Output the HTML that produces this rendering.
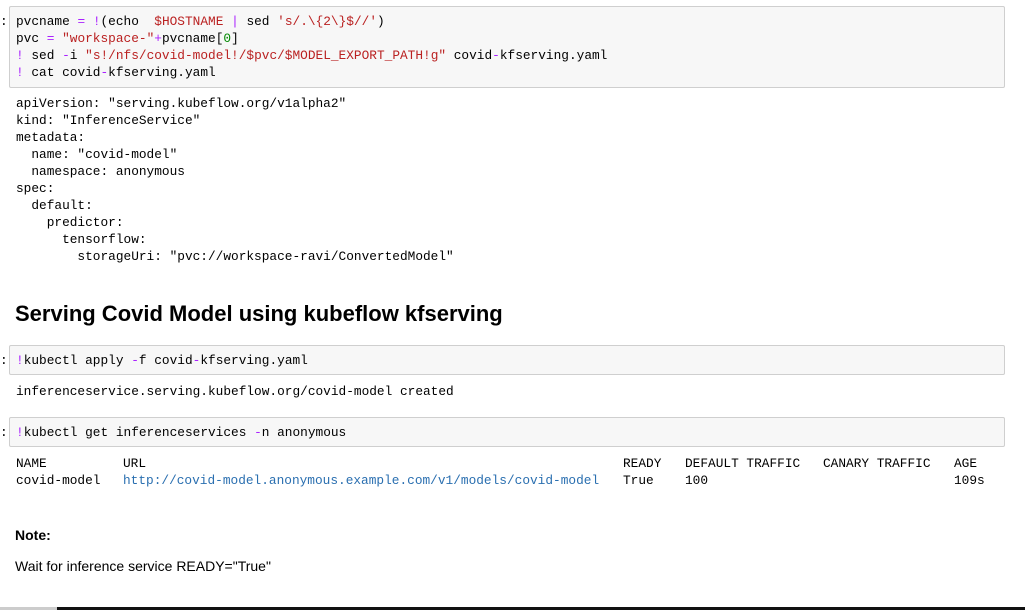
<!DOCTYPE html>
<html><head><meta charset="utf-8"><style>
body{margin:0;width:1025px;height:610px;background:#fff;position:relative;overflow:hidden;font-family:"Liberation Mono",monospace;font-size:12.8px;color:#000}
.a{position:absolute;white-space:pre;line-height:17px}
.box{position:absolute;left:9px;width:994px;background:#f7f7f7;border:1px solid #cfcfcf;border-radius:2px}
.o{color:#aa22ff}.s{color:#ba2121}.n{color:#080}.u{color:#2a6fb0}
.sans{font-family:"Liberation Sans",sans-serif}
</style></head><body>
<div class="box" style="top:6px;height:80px"></div>
<div class="a" style="left:0;top:13px">:</div>
<div class="a" style="left:16px;top:13px">pvcname <span class="o">=</span> <span class="o">!</span>(echo  <span class="s">$HOSTNAME</span> <span class="o">|</span> sed <span class="s">'s/.\{2\}$//'</span>)
pvc <span class="o">=</span> <span class="s">"workspace-"</span><span class="o">+</span>pvcname[<span class="n">0</span>]
<span class="o">!</span> sed <span class="o">-</span>i <span class="s">"s!/nfs/covid-model!/$pvc/$MODEL_EXPORT_PATH!g"</span> covid<span class="o">-</span>kfserving.yaml
<span class="o">!</span> cat covid<span class="o">-</span>kfserving.yaml</div>
<div class="a" style="left:16px;top:95px">apiVersion: "serving.kubeflow.org/v1alpha2"
kind: "InferenceService"
metadata:
  name: "covid-model"
  namespace: anonymous
spec:
  default:
    predictor:
      tensorflow:
        storageUri: "pvc://workspace-ravi/ConvertedModel"</div>
<div class="a sans" style="left:15px;top:301px;font-size:22px;font-weight:bold;line-height:26px">Serving Covid Model using kubeflow kfserving</div>
<div class="box" style="top:345px;height:28px"></div>
<div class="a" style="left:0;top:352px">:</div>
<div class="a" style="left:16px;top:352px"><span class="o">!</span>kubectl apply <span class="o">-</span>f covid<span class="o">-</span>kfserving.yaml</div>
<div class="a" style="left:16px;top:383px">inferenceservice.serving.kubeflow.org/covid-model created</div>
<div class="box" style="top:417px;height:28px"></div>
<div class="a" style="left:0;top:424px">:</div>
<div class="a" style="left:16px;top:424px"><span class="o">!</span>kubectl get inferenceservices <span class="o">-</span>n anonymous</div>
<div class="a" style="left:16px;top:455px">NAME
covid-model</div>
<div class="a" style="left:123px;top:455px">URL
<span class="u">http://covid-model.anonymous.example.com/v1/models/covid-model</span></div>
<div class="a" style="left:623px;top:455px">READY
True</div>
<div class="a" style="left:685px;top:455px">DEFAULT TRAFFIC
100</div>
<div class="a" style="left:823px;top:455px">CANARY TRAFFIC</div>
<div class="a" style="left:954px;top:455px">AGE
109s</div>
<div class="a sans" style="left:15px;top:527px;font-size:14px;font-weight:bold">Note:</div>
<div class="a sans" style="left:15px;top:558px;font-size:14px">Wait for inference service READY="True"</div>
<div style="position:absolute;left:0;top:607px;width:57px;height:3px;background:#ccc"></div>
<div style="position:absolute;left:57px;top:607px;width:968px;height:3px;background:#111"></div>
</body></html>
